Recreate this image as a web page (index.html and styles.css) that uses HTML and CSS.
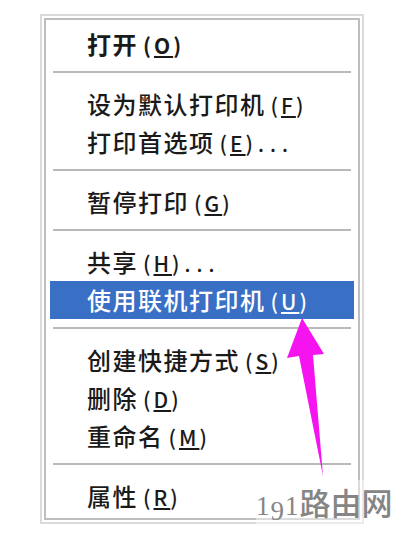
FILE: index.html
```html
<!DOCTYPE html>
<html lang="zh-CN">
<head>
    <meta charset="UTF-8">
    <meta name="viewport" content="width=device-width, initial-scale=1.0">
    <title>打印机右键菜单</title>
    <link rel="stylesheet" href="styles.css">
</head>
<body>
    <div class="menu">
        <div class="menu-inner">
            <div class="item bold">打开<span class="key">(<u>O</u>)</span></div>
            <div class="sep"></div>
            <div class="item">设为默认打印机<span class="key">(<u>F</u>)</span></div>
            <div class="item">打印首选项<span class="key">(<u>E</u>)</span><span class="dots">...</span></div>
            <div class="sep"></div>
            <div class="item">暂停打印<span class="key">(<u>G</u>)</span></div>
            <div class="sep"></div>
            <div class="item">共享<span class="key">(<u>H</u>)</span><span class="dots">...</span></div>
            <div class="item selected">使用联机打印机<span class="key">(<u>U</u>)</span></div>
            <div class="sep"></div>
            <div class="item">创建快捷方式<span class="key">(<u>S</u>)</span></div>
            <div class="item">删除<span class="key">(<u>D</u>)</span></div>
            <div class="item">重命名<span class="key">(<u>M</u>)</span></div>
            <div class="sep"></div>
            <div class="item">属性<span class="key">(<u>R</u>)</span></div>
        </div>
    </div>

    <!-- 指示箭头 -->
    <svg class="arrow" viewBox="0 0 400 541" xmlns="http://www.w3.org/2000/svg">
        <polygon points="302,318 324,354 313,355 323,476 299,356 287,358" fill="#f514f0"/>
    </svg>

    <div class="mark"><span class="num">1</span><span class="num nine">9</span><span class="num">1</span>路由网</div>
</body>
</html>
```

FILE: styles.css
```css
body {
    margin: 0;
    background-color: #fff;
    font-family: "Noto Sans CJK SC", "Noto Sans", sans-serif;
    color: #1a1a1a;
}
.menu {
    width: 324px;
    height: 510px;
    margin: 14px 0 0 40px;
    padding: 2px;
    border: 2px solid #dadada;
    box-sizing: border-box;
}
.menu-inner {
    height: 100%;
    padding-top: 5px;
    border: 2px solid #bebebe;
    box-sizing: border-box;
}
.item {
    height: 38px;
    line-height: 38px;
    margin: 0 4px;
    padding-left: 37px;
    font-size: 24px;
    font-weight: 500;
    letter-spacing: 1.5px;
    white-space: nowrap;
}
.item.bold {
    font-weight: bold;
}
.item.selected {
    background-color: #3a6fc6;
    color: #fff;
}
.key {
    margin-left: 5px;
    font-size: 21px;
    letter-spacing: 3px;
}
.key u {
    text-underline-offset: 2px;
}
.dots {
    margin-left: 2px;
    font-size: 20px;
    letter-spacing: 6px;
}
.sep {
    height: 2px;
    margin: 8px 7px 12px;
    background-color: #b9b9b9;
}
.arrow {
    position: absolute;
    left: 0;
    top: 0;
    width: 400px;
    height: 541px;
}
.mark {
    position: absolute;
    left: 256px;
    top: 480px;
    width: 144px;
    height: 46px;
    line-height: 44px;
    background-color: rgba(255, 255, 255, 0.45);
    color: #858585;
    font-size: 31px;
    font-weight: 500;
    white-space: nowrap;
}
.num {
    font-family: "Liberation Serif", serif;
    font-size: 27px;
    font-weight: normal;
    margin-right: 1px;
}
.nine {
    position: relative;
    top: 5px;
}
```
